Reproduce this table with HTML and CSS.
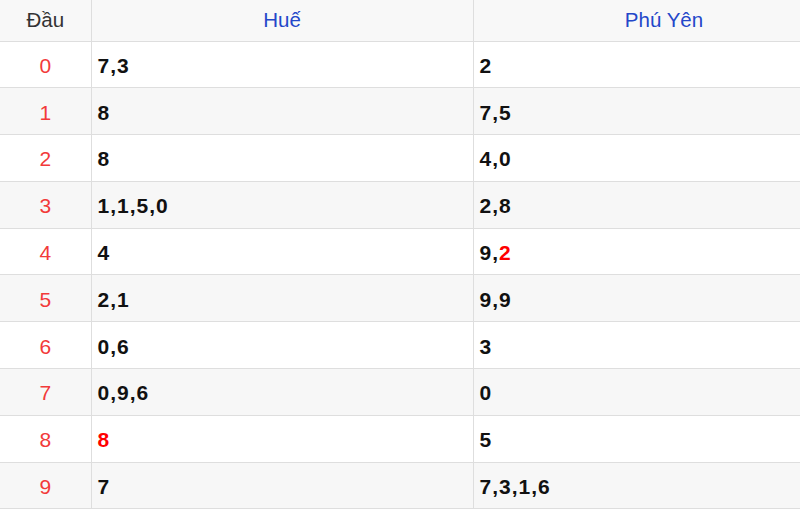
FILE: index.html
```html
<!DOCTYPE html>
<html lang="vi">
<head>
<meta charset="utf-8">
<title>Lô tô đầu</title>
<link rel="stylesheet" href="styles.css">
</head>
<body>
<div class="frame">
<table class="loto">
  <colgroup>
    <col class="c-dau">
    <col class="c-a">
    <col class="c-b">
  </colgroup>
  <thead>
    <tr><th class="dau-h">Đầu</th><th class="prov">Huế</th><th class="prov">Phú Yên</th></tr>
  </thead>
  <tbody>
    <tr><td class="dau">0</td><td class="val">7,3</td><td class="val">2</td></tr>
    <tr><td class="dau">1</td><td class="val">8</td><td class="val">7,5</td></tr>
    <tr><td class="dau">2</td><td class="val">8</td><td class="val">4,0</td></tr>
    <tr><td class="dau">3</td><td class="val">1,1,5,0</td><td class="val">2,8</td></tr>
    <tr><td class="dau">4</td><td class="val">4</td><td class="val">9,<span class="hl">2</span></td></tr>
    <tr><td class="dau">5</td><td class="val">2,1</td><td class="val">9,9</td></tr>
    <tr><td class="dau">6</td><td class="val">0,6</td><td class="val">3</td></tr>
    <tr><td class="dau">7</td><td class="val">0,9,6</td><td class="val">0</td></tr>
    <tr><td class="dau">8</td><td class="val"><span class="hl">8</span></td><td class="val">5</td></tr>
    <tr><td class="dau">9</td><td class="val">7</td><td class="val">7,3,1,6</td></tr>
  </tbody>
</table>
</div>
</body>
</html>
```
FILE: styles.css
```css
html, body {
  margin: 0;
  padding: 0;
  background: #fff;
}
body {
  font-family: "Liberation Sans", Arial, sans-serif;
}
.frame {
  width: 800px;
  height: 512px;
  overflow: hidden;
}
.loto {
  width: 855px;
  border-collapse: collapse;
  table-layout: fixed;
}
.c-dau { width: 91px; }
.c-a { width: 382px; }
.c-b { width: 382px; }

.loto th,
.loto td {
  border: 1px solid #dedede;
  padding: 0;
  vertical-align: middle;
}
.loto tr > :first-child { border-left: none; }
.loto thead th { border-top: none; }

.loto thead tr {
  height: 41px;
  background: #f8f8f8;
}
.loto th {
  font-weight: normal;
  font-size: 20.5px;
  text-align: center;
}
.loto .dau-h { color: #333; }
.loto .prov { color: #2447c9; }

.loto tbody tr {
  height: 46.8px;
}
.loto tbody tr:nth-child(even) {
  background: #f7f7f7;
}
.loto td {
  padding-top: 3px;
}
.loto .dau {
  text-align: center;
  color: #f23a3a;
  font-size: 21px;
}
.loto .val {
  font-weight: bold;
  font-size: 21px;
  letter-spacing: 1px;
  color: #111;
  padding-left: 6px;
}
.hl { color: #f00; }
```
